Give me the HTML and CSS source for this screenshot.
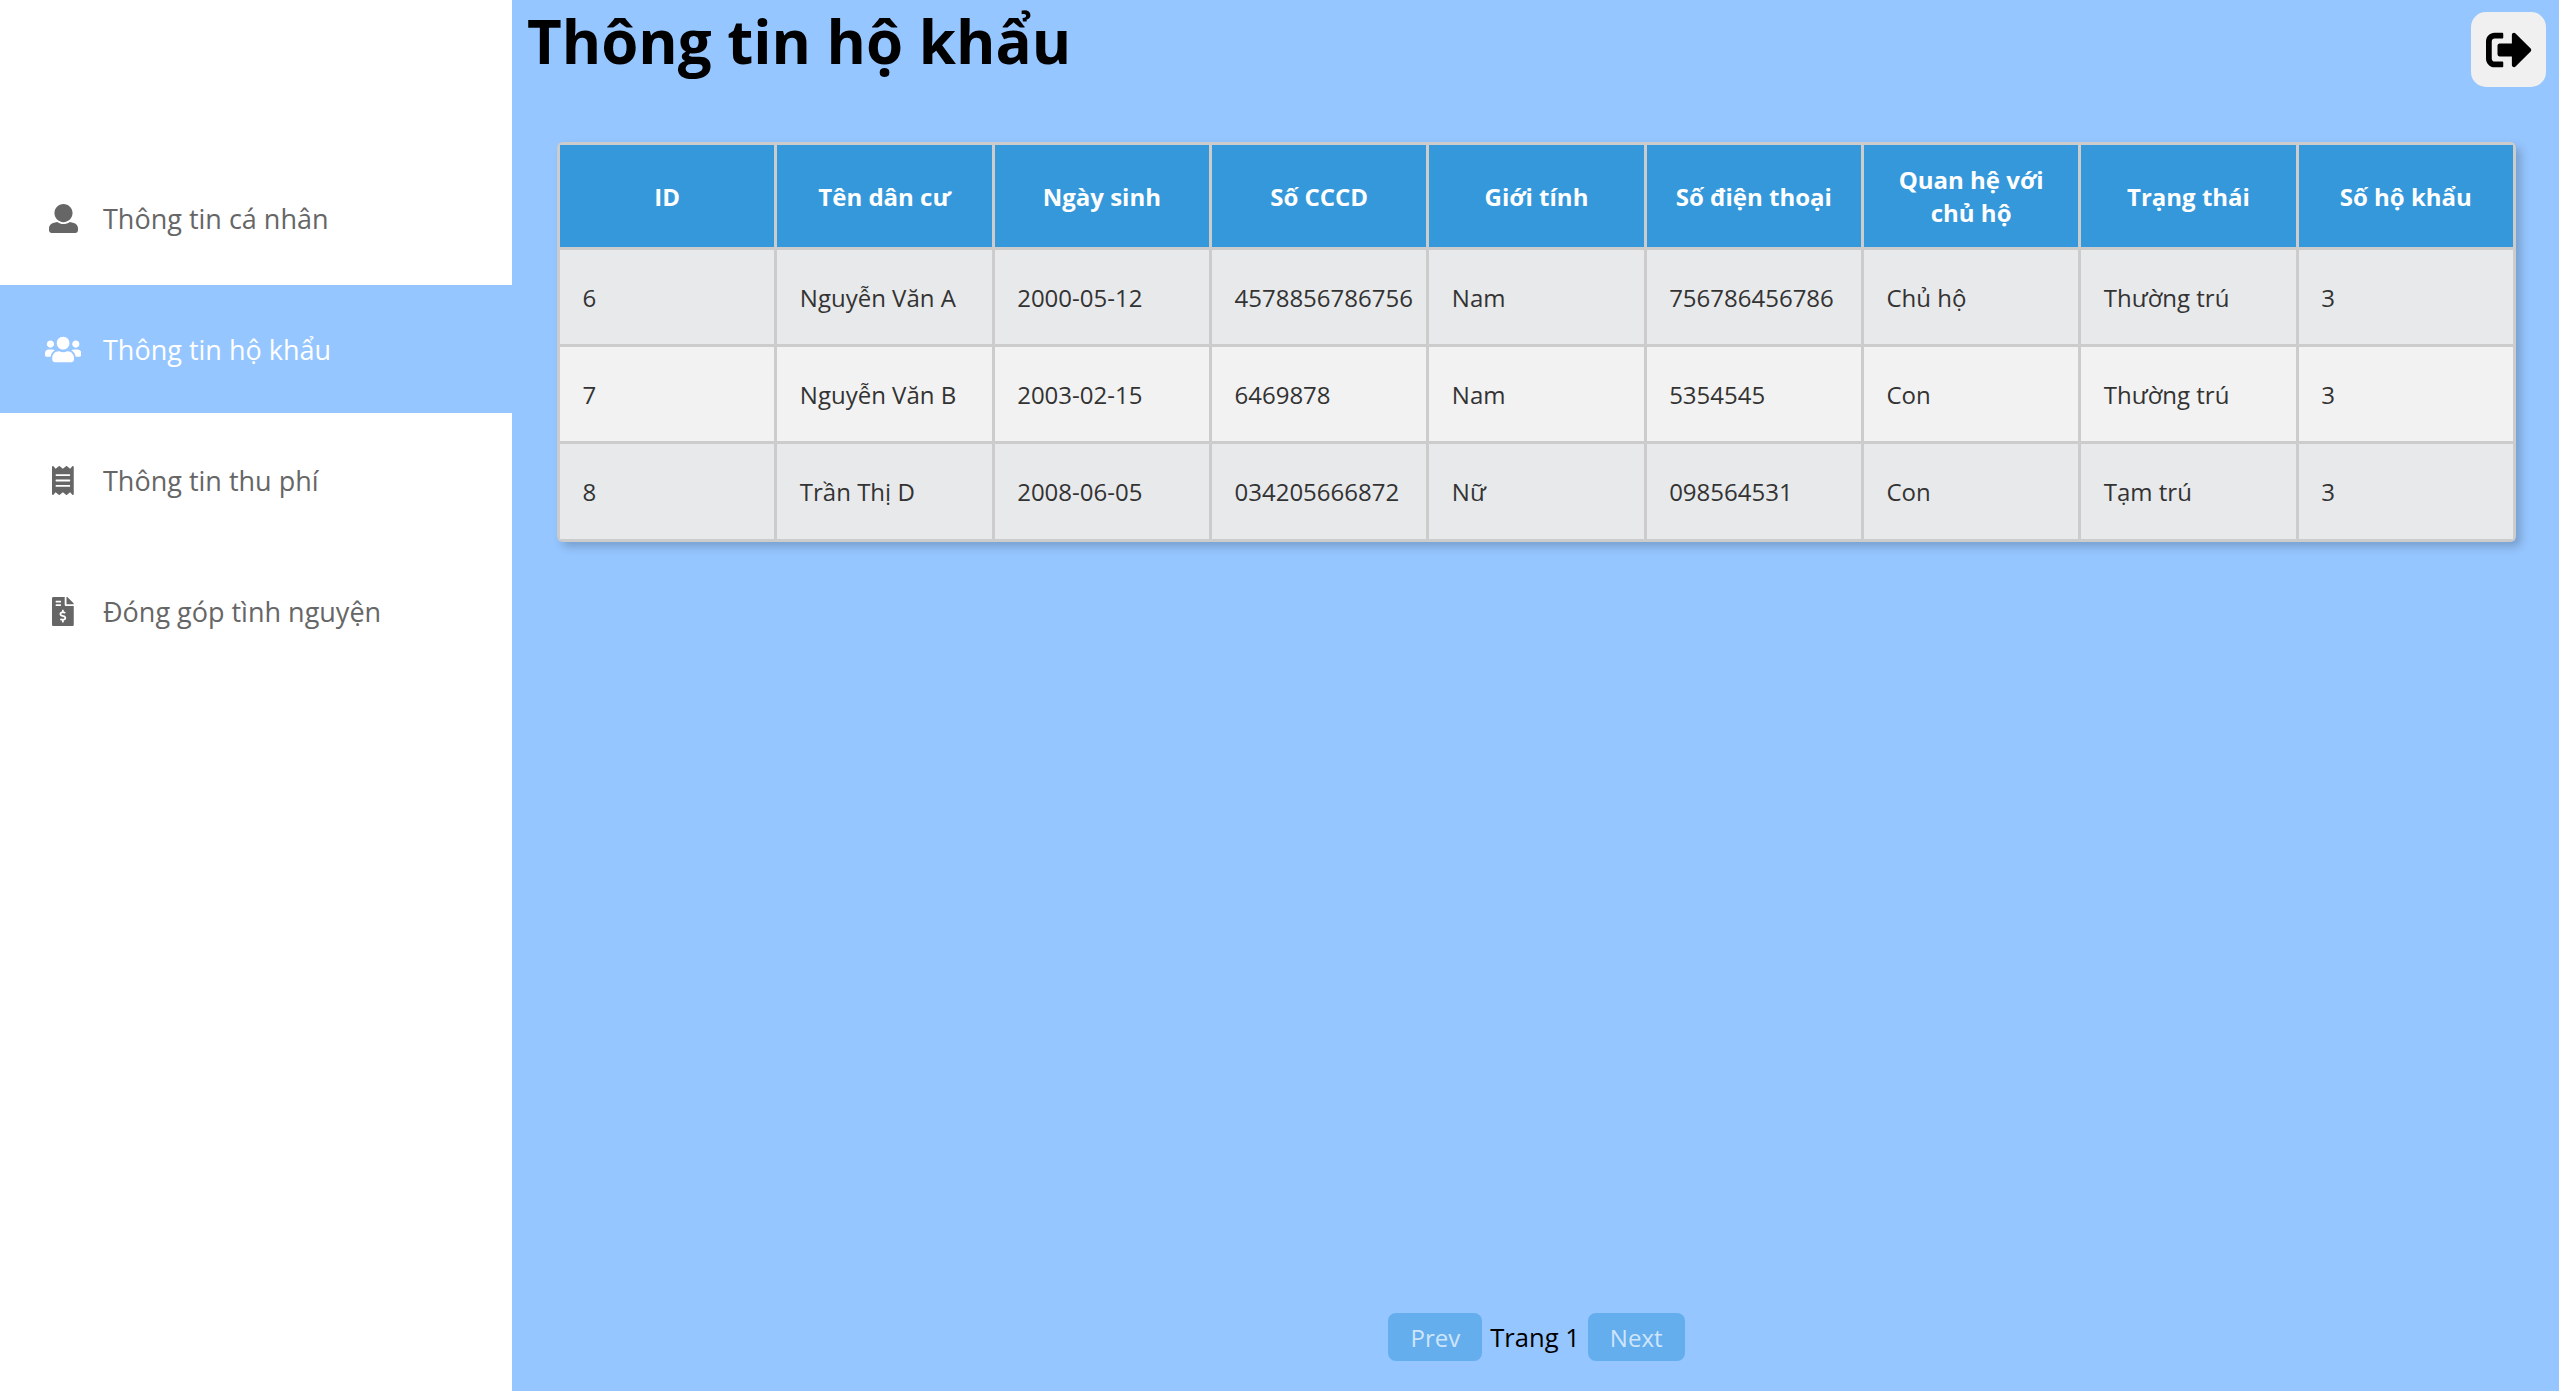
FILE: index.html
```html
<!DOCTYPE html>
<html lang="vi">
<head>
<meta charset="utf-8">
<title>Thông tin hộ khẩu</title>
<link rel="stylesheet" href="styles.css">
</head>
<body>
<div class="app">
  <aside class="sidebar">
    <nav class="menu">
      <a class="menu-item">
        <span class="menu-icon"><svg class="ico" viewBox="0 0 512 512"><path d="M256 0c88.366 0 160 71.634 160 160s-71.634 160-160 160S96 248.366 96 160 167.634 0 256 0zm183.283 333.821l-71.313-17.828c-74.923 53.89-165.738 41.864-223.94 0l-71.313 17.828C29.981 344.505 0 382.903 0 426.955V464c0 26.51 21.49 48 48 48h416c26.51 0 48-21.49 48-48v-37.045c0-44.052-29.981-82.45-72.717-93.134z"/></svg></span>
        <span>Thông tin cá nhân</span>
      </a>
      <a class="menu-item active">
        <span class="menu-icon"><svg class="ico" viewBox="0 0 640 512"><path d="M96 224c35.3 0 64-28.7 64-64s-28.7-64-64-64-64 28.7-64 64 28.7 64 64 64zm448 0c35.3 0 64-28.7 64-64s-28.7-64-64-64-64 28.7-64 64 28.7 64 64 64zm32 32h-64c-17.6 0-33.5 7.1-45.1 18.6 40.3 22.1 68.9 62 75.1 109.4h66c17.7 0 32-14.3 32-32v-32c0-35.3-28.7-64-64-64zm-256 0c61.9 0 112-50.1 112-112S381.9 32 320 32 208 82.1 208 144s50.1 112 112 112zm76.8 32h-8.3c-20.8 10-43.9 16-68.5 16s-47.6-6-68.5-16h-8.3C179.6 288 128 339.6 128 403.2V432c0 26.5 21.5 48 48 48h288c26.5 0 48-21.5 48-48v-28.8c0-63.6-51.6-115.2-115.2-115.2zm-223.7-13.4C161.5 263.1 145.6 256 128 256H64c-35.3 0-64 28.7-64 64v32c0 17.7 14.3 32 32 32h65.9c6.3-47.4 34.9-87.3 75.2-109.4z"/></svg></span>
        <span>Thông tin hộ khẩu</span>
      </a>
      <a class="menu-item">
        <span class="menu-icon"><svg class="ico" viewBox="0 0 384 512"><path d="M358.4 3.2L320 48 265.6 3.2a15.9 15.9 0 0 0-19.2 0L192 48 137.6 3.2a15.9 15.9 0 0 0-19.2 0L64 48 25.6 3.2C15-4.7 0 2.8 0 16v480c0 13.2 15 20.7 25.6 12.8L64 464l54.4 44.8a15.9 15.9 0 0 0 19.2 0L192 464l54.4 44.8a15.9 15.9 0 0 0 19.2 0L320 464l38.4 44.8c10.5 7.9 25.6.4 25.6-12.8V16c0-13.2-15-20.7-25.6-12.8zM320 360c0 4.4-3.6 8-8 8H72c-4.4 0-8-3.6-8-8v-16c0-4.4 3.6-8 8-8h240c4.4 0 8 3.6 8 8v16zm0-96c0 4.4-3.6 8-8 8H72c-4.4 0-8-3.6-8-8v-16c0-4.4 3.6-8 8-8h240c4.4 0 8 3.6 8 8v16zm0-96c0 4.4-3.6 8-8 8H72c-4.4 0-8-3.6-8-8v-16c0-4.4 3.6-8 8-8h240c4.4 0 8 3.6 8 8v16z"/></svg></span>
        <span>Thông tin thu phí</span>
      </a>
      <a class="menu-item">
        <span class="menu-icon"><svg class="ico" viewBox="0 0 384 512"><path d="M377 105L279.1 7c-4.5-4.5-10.6-7-17-7H256v128h128v-6.1c0-6.3-2.5-12.4-7-16.9zm-153 31V0H24C10.7 0 0 10.7 0 24v464c0 13.3 10.7 24 24 24h336c13.3 0 24-10.7 24-24V160H248c-13.2 0-24-10.8-24-24zM64 72c0-4.42 3.58-8 8-8h80c4.42 0 8 3.58 8 8v16c0 4.42-3.58 8-8 8H72c-4.42 0-8-3.58-8-8V72zm0 80v-16c0-4.42 3.58-8 8-8h80c4.42 0 8 3.58 8 8v16c0 4.42-3.58 8-8 8H72c-4.42 0-8-3.58-8-8zm144 263.88V440c0 4.42-3.58 8-8 8h-16c-4.42 0-8-3.58-8-8v-24.29c-11.29-.58-22.27-4.52-31.37-11.35-3.9-2.93-4.1-8.77-.57-12.14l11.75-11.21c2.77-2.64 6.89-2.76 10.13-.73 3.87 2.42 8.26 3.72 12.82 3.72h28.11c6.5 0 11.8-5.92 11.8-13.19 0-5.95-3.61-11.19-8.77-12.73l-45-13.5c-18.59-5.58-31.58-23.42-31.58-43.39 0-24.52 19.05-44.44 42.67-45.07V232c0-4.42 3.58-8 8-8h16c4.42 0 8 3.58 8 8v24.29c11.29.58 22.27 4.51 31.37 11.35 3.9 2.93 4.1 8.77.57 12.14l-11.75 11.21c-2.77 2.64-6.89 2.76-10.13.73-3.87-2.43-8.26-3.72-12.82-3.72h-28.11c-6.5 0-11.8 5.92-11.8 13.19 0 5.95 3.61 11.19 8.77 12.73l45 13.5c18.59 5.58 31.58 23.42 31.58 43.39 0 24.53-19.05 44.44-42.67 45.07z"/></svg></span>
        <span>Đóng góp tình nguyện</span>
      </a>
    </nav>
  </aside>
  <main class="main">
    <header class="topbar">
      <h1 class="title">Thông tin hộ khẩu</h1>
      <button class="logout"><svg class="logout-ico" viewBox="0 0 512 512"><path d="M497 273L329 441c-15 15-41 4.5-41-17v-96H152c-13.3 0-24-10.7-24-24v-96c0-13.3 10.7-24 24-24h136V88c0-21.4 25.9-32 41-17l168 168c9.3 9.4 9.3 24.6 0 34zM192 436v-40c0-6.6-5.4-12-12-12H96c-17.7 0-32-14.3-32-32V160c0-17.7 14.3-32 32-32h84c6.6 0 12-5.4 12-12V76c0-6.6-5.4-12-12-12H96c-53 0-96 43-96 96v192c0 53 43 96 96 96h84c6.6 0 12-5.4 12-12z"/></svg></button>
    </header>
    <div class="table-wrap">
      <table class="data">
        <thead>
          <tr><th>ID</th><th>Tên dân cư</th><th>Ngày sinh</th><th>Số CCCD</th><th>Giới tính</th><th>Số điện thoại</th><th>Quan hệ với chủ hộ</th><th>Trạng thái</th><th>Số hộ khẩu</th></tr>
        </thead>
        <tbody>
          <tr><td>6</td><td>Nguyễn Văn A</td><td>2000-05-12</td><td>4578856786756</td><td>Nam</td><td>756786456786</td><td>Chủ hộ</td><td>Thường trú</td><td>3</td></tr>
          <tr><td>7</td><td>Nguyễn Văn B</td><td>2003-02-15</td><td>6469878</td><td>Nam</td><td>5354545</td><td>Con</td><td>Thường trú</td><td>3</td></tr>
          <tr><td>8</td><td>Trần Thị D</td><td>2008-06-05</td><td>034205666872</td><td>Nữ</td><td>098564531</td><td>Con</td><td>Tạm trú</td><td>3</td></tr>
        </tbody>
      </table>
    </div>
    <div class="pager">
      <button class="page-btn" disabled>Prev</button>
      <span class="page-label">Trang 1</span>
      <button class="page-btn" disabled>Next</button>
    </div>
  </main>
</div>
</body>
</html>
```
FILE: styles.css
```css
* { box-sizing: border-box; }
html, body { margin: 0; height: 100%; }
body { font-family: "Open Sans", "Noto Sans", sans-serif; background: #96c6ff; }
.app { display: flex; height: 1391px; overflow: hidden; }

.sidebar { width: 512px; flex: none; background: #fff; }
.menu { display: flex; flex-direction: column; padding-top: 154px; }
.menu-item { height: 128px; margin-bottom: 3px; display: flex; align-items: center; color: #666; font-size: 27px; }
.menu-item.active { background: #96c6ff; color: #fff; }
.menu-icon { width: 103px; flex: none; display: flex; justify-content: center; padding-left: 23px; }
.ico { height: 29px; fill: currentColor; display: block; }

.main { flex: 1; min-width: 0; display: flex; flex-direction: column; padding: 0 13px 0 15px; }
.topbar { height: 142px; display: flex; justify-content: space-between; align-items: flex-start; }
.title { margin: 0; font-size: 60px; line-height: 82px; font-weight: 700; color: #000; }
.logout { width: 75px; height: 75px; margin-top: 12px; border: 0; border-radius: 15px; background: #f0f0f0; display: flex; align-items: center; justify-content: center; padding: 0; }
.logout-ico { width: 46px; height: 46px; fill: #000; display: block; }

.table-wrap { margin: 0 30px; border-radius: 6px; overflow: hidden; box-shadow: 5px 5px 10px rgba(0,0,0,.2); }
.data { width: 100%; border-collapse: collapse; table-layout: fixed; font-size: 24px; color: #333; }
.data th, .data td { border: 3px solid #ccc; padding: 0 22.5px; }
.data th { height: 105px; background: #3498db; color: #fff; font-weight: 700; text-align: center; line-height: 33px; }
.data td { height: 97px; text-align: left; white-space: nowrap; }
.data tbody tr:last-child td { height: 98px; }
.data tbody tr:nth-child(odd) td { background: #e8e9eb; }
.data tbody tr:nth-child(even) td { background: #f2f2f2; }

.pager { margin-top: auto; margin-bottom: 30px; display: flex; justify-content: center; align-items: center; gap: 8px; }
.page-btn { height: 48px; padding: 0 22px; border: 0; border-radius: 8px; background: #64aeee; color: #cfe5fb; font: inherit; font-size: 24px; }
.page-label { font-size: 25.6px; color: #000; }
```
